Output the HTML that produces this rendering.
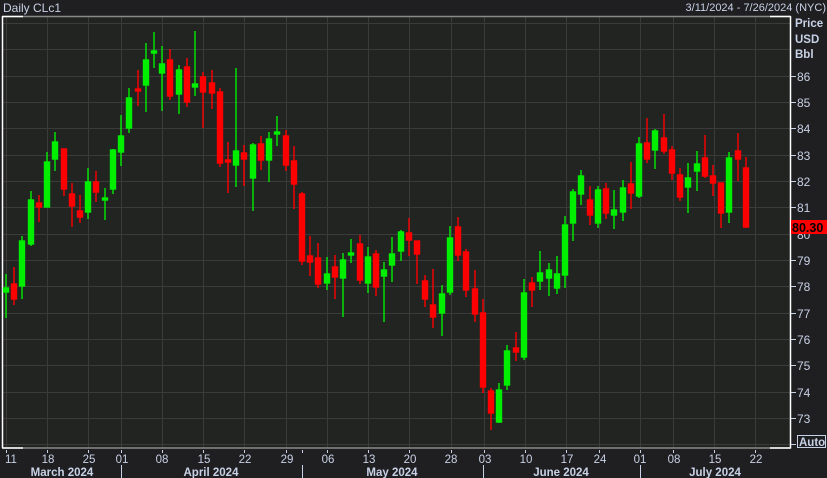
<!DOCTYPE html>
<html><head><meta charset="utf-8"><style>
html,body{margin:0;padding:0;background:#1f1e21;width:827px;height:478px;overflow:hidden}
svg{display:block}
text{font-family:"Liberation Sans",sans-serif}
</style></head><body>
<svg width="827" height="478" viewBox="0 0 827 478" xmlns="http://www.w3.org/2000/svg">
<rect x="0" y="0" width="827" height="478" fill="#1f1e21"/>
<rect x="3" y="16" width="787" height="432" fill="#222421"/>
<g stroke="#3a3b3a" stroke-width="1">
<line x1="3" x2="790" y1="23.5" y2="23.5"/><line x1="3" x2="790" y1="49.5" y2="49.5"/>
<line x1="3" x2="790" y1="76.5" y2="76.5"/><line x1="3" x2="790" y1="102.5" y2="102.5"/>
<line x1="3" x2="790" y1="128.5" y2="128.5"/><line x1="3" x2="790" y1="155.5" y2="155.5"/>
<line x1="3" x2="790" y1="181.5" y2="181.5"/><line x1="3" x2="790" y1="207.5" y2="207.5"/>
<line x1="3" x2="790" y1="234.5" y2="234.5"/><line x1="3" x2="790" y1="260.5" y2="260.5"/>
<line x1="3" x2="790" y1="286.5" y2="286.5"/><line x1="3" x2="790" y1="313.5" y2="313.5"/>
<line x1="3" x2="790" y1="339.5" y2="339.5"/><line x1="3" x2="790" y1="365.5" y2="365.5"/>
<line x1="3" x2="790" y1="392.5" y2="392.5"/><line x1="3" x2="790" y1="418.5" y2="418.5"/>
<line x1="3" x2="790" y1="444.5" y2="444.5"/>
<line x1="6.5" x2="6.5" y1="16" y2="448"/><line x1="47.5" x2="47.5" y1="16" y2="448"/>
<line x1="88.5" x2="88.5" y1="16" y2="448"/><line x1="121.5" x2="121.5" y1="16" y2="448"/>
<line x1="162.5" x2="162.5" y1="16" y2="448"/><line x1="203.5" x2="203.5" y1="16" y2="448"/>
<line x1="244.5" x2="244.5" y1="16" y2="448"/><line x1="286.5" x2="286.5" y1="16" y2="448"/>
<line x1="327.5" x2="327.5" y1="16" y2="448"/><line x1="368.5" x2="368.5" y1="16" y2="448"/>
<line x1="409.5" x2="409.5" y1="16" y2="448"/><line x1="451.5" x2="451.5" y1="16" y2="448"/>
<line x1="484.5" x2="484.5" y1="16" y2="448"/><line x1="525.5" x2="525.5" y1="16" y2="448"/>
<line x1="566.5" x2="566.5" y1="16" y2="448"/><line x1="599.5" x2="599.5" y1="16" y2="448"/>
<line x1="640.5" x2="640.5" y1="16" y2="448"/><line x1="673.5" x2="673.5" y1="16" y2="448"/>
<line x1="714.5" x2="714.5" y1="16" y2="448"/><line x1="755.5" x2="755.5" y1="16" y2="448"/>
</g>
<g stroke-width="1.5">
<line x1="3" x2="790" y1="16.5" y2="16.5" stroke="#8a8a8a"/>
<line x1="3" x2="790" y1="448" y2="448" stroke="#8a8a8a"/>
<line x1="2.5" x2="2.5" y1="16" y2="448" stroke="#ffffff"/>
<line x1="2" x2="23" y1="16.5" y2="16.5" stroke="#ffffff"/>
<line x1="2" x2="23" y1="448" y2="448" stroke="#ffffff"/>
<line x1="790.5" x2="790.5" y1="16" y2="448.5" stroke="#ffffff"/>
<line x1="770" x2="791" y1="16.5" y2="16.5" stroke="#ffffff"/>
<line x1="770" x2="791" y1="448" y2="448" stroke="#ffffff"/>
</g>
<g stroke-width="1.4">
<g stroke="#00ee00" fill="#00ee00">
<line x1="6" x2="6" y1="274" y2="318"/><rect x="3.5" y="288" width="5" height="4"/>
<line x1="22" x2="22" y1="236" y2="299"/><rect x="19.5" y="241" width="5" height="45"/>
<line x1="31" x2="31" y1="191" y2="246"/><rect x="28.5" y="200" width="5" height="44"/>
<line x1="47" x2="47" y1="152" y2="207"/><rect x="44.5" y="162" width="5" height="45"/>
<line x1="55" x2="55" y1="132" y2="171"/><rect x="52.5" y="142" width="5" height="17"/>
<line x1="88" x2="88" y1="168" y2="219"/><rect x="85.5" y="182" width="5" height="30"/>
<line x1="105" x2="105" y1="188" y2="220"/><rect x="102.5" y="198" width="5" height="2"/>
<line x1="113" x2="113" y1="149" y2="194"/><rect x="110.5" y="150" width="5" height="39"/>
<line x1="121" x2="121" y1="115" y2="166"/><rect x="118.5" y="136" width="5" height="16"/>
<line x1="129" x2="129" y1="88" y2="133"/><rect x="126.5" y="98" width="5" height="30"/>
<line x1="146" x2="146" y1="43" y2="112"/><rect x="143.5" y="60" width="5" height="25"/>
<line x1="154" x2="154" y1="32" y2="68"/><rect x="151.5" y="51" width="5" height="2"/>
<line x1="162" x2="162" y1="46" y2="111"/><rect x="159.5" y="64" width="5" height="9"/>
<line x1="179" x2="179" y1="65" y2="114"/><rect x="176.5" y="70" width="5" height="24"/>
<line x1="195" x2="195" y1="31" y2="96"/><rect x="192.5" y="84" width="5" height="3"/>
<line x1="236" x2="236" y1="68" y2="187"/><rect x="233.5" y="151" width="5" height="14"/>
<line x1="253" x2="253" y1="143" y2="211"/><rect x="250.5" y="145" width="5" height="33"/>
<line x1="269" x2="269" y1="132" y2="182"/><rect x="266.5" y="139" width="5" height="21"/>
<line x1="277" x2="277" y1="116" y2="146"/><rect x="274.5" y="132" width="5" height="2"/>
<line x1="327" x2="327" y1="257" y2="290"/><rect x="324.5" y="274" width="5" height="9"/>
<line x1="343" x2="343" y1="253" y2="317"/><rect x="340.5" y="260" width="5" height="18"/>
<line x1="351" x2="351" y1="239" y2="263"/><rect x="348.5" y="253" width="5" height="2"/>
<line x1="368" x2="368" y1="247" y2="293"/><rect x="365.5" y="257" width="5" height="26"/>
<line x1="384" x2="384" y1="262" y2="322"/><rect x="381.5" y="270" width="5" height="6"/>
<line x1="392" x2="392" y1="237" y2="282"/><rect x="389.5" y="254" width="5" height="11"/>
<line x1="401" x2="401" y1="230" y2="261"/><rect x="398.5" y="232" width="5" height="19"/>
<line x1="442" x2="442" y1="285" y2="336"/><rect x="439.5" y="294" width="5" height="19"/>
<line x1="450" x2="450" y1="226" y2="295"/><rect x="447.5" y="238" width="5" height="54"/>
<line x1="499" x2="499" y1="383" y2="423"/><rect x="496.5" y="390" width="5" height="32"/>
<line x1="507" x2="507" y1="345" y2="390"/><rect x="504.5" y="351" width="5" height="34"/>
<line x1="524" x2="524" y1="279" y2="360"/><rect x="521.5" y="293" width="5" height="64"/>
<line x1="540" x2="540" y1="251" y2="290"/><rect x="537.5" y="273" width="5" height="8"/>
<line x1="549" x2="549" y1="263" y2="296"/><rect x="546.5" y="270" width="5" height="8"/>
<line x1="557" x2="557" y1="256" y2="294"/><rect x="554.5" y="274" width="5" height="14"/>
<line x1="565" x2="565" y1="216" y2="288"/><rect x="562.5" y="225" width="5" height="50"/>
<line x1="573" x2="573" y1="189" y2="241"/><rect x="570.5" y="192" width="5" height="31"/>
<line x1="581" x2="581" y1="170" y2="205"/><rect x="578.5" y="176" width="5" height="18"/>
<line x1="598" x2="598" y1="186" y2="228"/><rect x="595.5" y="190" width="5" height="33"/>
<line x1="614" x2="614" y1="190" y2="229"/><rect x="611.5" y="210" width="5" height="5"/>
<line x1="623" x2="623" y1="180" y2="221"/><rect x="620.5" y="188" width="5" height="24"/>
<line x1="639" x2="639" y1="137" y2="198"/><rect x="636.5" y="144" width="5" height="52"/>
<line x1="655" x2="655" y1="129" y2="169"/><rect x="652.5" y="131" width="5" height="19"/>
<line x1="688" x2="688" y1="163" y2="213"/><rect x="685.5" y="178" width="5" height="9"/>
<line x1="697" x2="697" y1="151" y2="191"/><rect x="694.5" y="164" width="5" height="7"/>
<line x1="729" x2="729" y1="152" y2="223"/><rect x="726.5" y="158" width="5" height="54"/>
</g>
<g stroke="#ff0000" fill="#ff0000">
<line x1="14" x2="14" y1="267" y2="305"/><rect x="11.5" y="284" width="5" height="15"/>
<line x1="39" x2="39" y1="195" y2="222"/><rect x="36.5" y="203" width="5" height="4"/>
<line x1="64" x2="64" y1="149" y2="196"/><rect x="61.5" y="149" width="5" height="40"/>
<line x1="72" x2="72" y1="183" y2="227"/><rect x="69.5" y="194" width="5" height="12"/>
<line x1="80" x2="80" y1="195" y2="223"/><rect x="77.5" y="211" width="5" height="6"/>
<line x1="96" x2="96" y1="171" y2="202"/><rect x="93.5" y="182" width="5" height="10"/>
<line x1="138" x2="138" y1="70" y2="106"/><rect x="135.5" y="89" width="5" height="2"/>
<line x1="170" x2="170" y1="49" y2="100"/><rect x="167.5" y="60" width="5" height="36"/>
<line x1="187" x2="187" y1="58" y2="107"/><rect x="184.5" y="67" width="5" height="35"/>
<line x1="203" x2="203" y1="72" y2="128"/><rect x="200.5" y="77" width="5" height="15"/>
<line x1="212" x2="212" y1="70" y2="109"/><rect x="209.5" y="83" width="5" height="10"/>
<line x1="220" x2="220" y1="88" y2="167"/><rect x="217.5" y="92" width="5" height="71"/>
<line x1="228" x2="228" y1="142" y2="193"/><rect x="225.5" y="160" width="5" height="2"/>
<line x1="244" x2="244" y1="145" y2="186"/><rect x="241.5" y="153" width="5" height="6"/>
<line x1="261" x2="261" y1="136" y2="170"/><rect x="258.5" y="144" width="5" height="16"/>
<line x1="286" x2="286" y1="130" y2="171"/><rect x="283.5" y="136" width="5" height="29"/>
<line x1="294" x2="294" y1="146" y2="209"/><rect x="291.5" y="161" width="5" height="23"/>
<line x1="302" x2="302" y1="192" y2="265"/><rect x="299.5" y="194" width="5" height="67"/>
<line x1="310" x2="310" y1="236" y2="276"/><rect x="307.5" y="256" width="5" height="6"/>
<line x1="318" x2="318" y1="243" y2="288"/><rect x="315.5" y="258" width="5" height="26"/>
<line x1="335" x2="335" y1="255" y2="299"/><rect x="332.5" y="267" width="5" height="10"/>
<line x1="360" x2="360" y1="235" y2="284"/><rect x="357.5" y="244" width="5" height="36"/>
<line x1="376" x2="376" y1="250" y2="296"/><rect x="373.5" y="254" width="5" height="33"/>
<line x1="409" x2="409" y1="218" y2="256"/><rect x="406.5" y="233" width="5" height="7"/>
<line x1="417" x2="417" y1="241" y2="284"/><rect x="414.5" y="241" width="5" height="13"/>
<line x1="425" x2="425" y1="275" y2="307"/><rect x="422.5" y="281" width="5" height="18"/>
<line x1="433" x2="433" y1="269" y2="328"/><rect x="430.5" y="305" width="5" height="12"/>
<line x1="458" x2="458" y1="217" y2="261"/><rect x="455.5" y="227" width="5" height="28"/>
<line x1="466" x2="466" y1="249" y2="297"/><rect x="463.5" y="252" width="5" height="38"/>
<line x1="475" x2="475" y1="270" y2="322"/><rect x="472.5" y="289" width="5" height="25"/>
<line x1="483" x2="483" y1="299" y2="393"/><rect x="480.5" y="313" width="5" height="74"/>
<line x1="491" x2="491" y1="388" y2="430"/><rect x="488.5" y="391" width="5" height="22"/>
<line x1="516" x2="516" y1="332" y2="361"/><rect x="513.5" y="348" width="5" height="4"/>
<line x1="532" x2="532" y1="277" y2="307"/><rect x="529.5" y="283" width="5" height="7"/>
<line x1="590" x2="590" y1="186" y2="225"/><rect x="587.5" y="200" width="5" height="15"/>
<line x1="606" x2="606" y1="183" y2="219"/><rect x="603.5" y="189" width="5" height="24"/>
<line x1="631" x2="631" y1="162" y2="209"/><rect x="628.5" y="184" width="5" height="9"/>
<line x1="647" x2="647" y1="118" y2="163"/><rect x="644.5" y="143" width="5" height="16"/>
<line x1="664" x2="664" y1="114" y2="154"/><rect x="661.5" y="138" width="5" height="13"/>
<line x1="672" x2="672" y1="146" y2="180"/><rect x="669.5" y="150" width="5" height="23"/>
<line x1="680" x2="680" y1="168" y2="201"/><rect x="677.5" y="175" width="5" height="22"/>
<line x1="705" x2="705" y1="135" y2="178"/><rect x="702.5" y="158" width="5" height="18"/>
<line x1="713" x2="713" y1="165" y2="196"/><rect x="710.5" y="176" width="5" height="7"/>
<line x1="721" x2="721" y1="183" y2="228"/><rect x="718.5" y="183" width="5" height="30"/>
<line x1="738" x2="738" y1="133" y2="181"/><rect x="735.5" y="151" width="5" height="8"/>
<line x1="746" x2="746" y1="157" y2="228"/><rect x="743.5" y="168" width="5" height="59"/>
</g>
</g>
<g font-size="11.5" font-weight="bold" fill="#c8d2e6">
<text x="795" y="27">Price</text>
<text x="795" y="43">USD</text>
<text x="795" y="58">Bbl</text>
</g>
<g stroke="#c8d2e6" stroke-width="1">
<line x1="791" x2="796" y1="76.5" y2="76.5"/><line x1="791" x2="796" y1="102.5" y2="102.5"/>
<line x1="791" x2="796" y1="128.5" y2="128.5"/><line x1="791" x2="796" y1="155.5" y2="155.5"/>
<line x1="791" x2="796" y1="181.5" y2="181.5"/><line x1="791" x2="796" y1="207.5" y2="207.5"/>
<line x1="791" x2="796" y1="260.5" y2="260.5"/>
<line x1="791" x2="796" y1="286.5" y2="286.5"/><line x1="791" x2="796" y1="313.5" y2="313.5"/>
<line x1="791" x2="796" y1="339.5" y2="339.5"/><line x1="791" x2="796" y1="365.5" y2="365.5"/>
<line x1="791" x2="796" y1="392.5" y2="392.5"/><line x1="791" x2="796" y1="418.5" y2="418.5"/>
<line x1="791" x2="796" y1="444.5" y2="444.5"/>
</g>
<g font-size="12" fill="#c8d2e6">
<text x="797" y="81">86</text><text x="797" y="107">85</text><text x="797" y="133">84</text>
<text x="797" y="160">83</text><text x="797" y="186">82</text><text x="797" y="212">81</text>
<text x="797" y="239">80</text><text x="797" y="265">79</text><text x="797" y="291">78</text>
<text x="797" y="318">77</text><text x="797" y="344">76</text><text x="797" y="370">75</text>
<text x="797" y="397">74</text><text x="797" y="423">73</text>
</g>
<rect x="791" y="220" width="36" height="14" fill="#ff0000"/>
<text x="792" y="232" font-size="12.5" font-weight="bold" fill="#000">80.30</text>
<rect x="797.5" y="435.5" width="28" height="12" fill="#1f1e21" stroke="#c8d2e6" stroke-width="1"/>
<text x="799" y="446" font-size="11.5" font-weight="bold" fill="#c8d2e6">Auto</text>
<text x="3" y="12" font-size="12" fill="#c8d2e6">Daily CLc1</text>
<text x="826" y="11" font-size="11" fill="#c8d2e6" text-anchor="end">3/11/2024 - 7/26/2024 (NYC)</text>
<g stroke="#c8d2e6" stroke-width="1">
<line x1="6.5" x2="6.5" y1="450" y2="453"/><line x1="47.5" x2="47.5" y1="450" y2="453"/>
<line x1="88.5" x2="88.5" y1="450" y2="453"/><line x1="121.5" x2="121.5" y1="450" y2="453"/>
<line x1="162.5" x2="162.5" y1="450" y2="453"/><line x1="203.5" x2="203.5" y1="450" y2="453"/>
<line x1="244.5" x2="244.5" y1="450" y2="453"/><line x1="286.5" x2="286.5" y1="450" y2="453"/>
<line x1="302.5" x2="302.5" y1="450" y2="453"/>
<line x1="327.5" x2="327.5" y1="450" y2="453"/><line x1="368.5" x2="368.5" y1="450" y2="453"/>
<line x1="409.5" x2="409.5" y1="450" y2="453"/><line x1="451.5" x2="451.5" y1="450" y2="453"/>
<line x1="484.5" x2="484.5" y1="450" y2="453"/><line x1="525.5" x2="525.5" y1="450" y2="453"/>
<line x1="566.5" x2="566.5" y1="450" y2="453"/><line x1="599.5" x2="599.5" y1="450" y2="453"/>
<line x1="640.5" x2="640.5" y1="450" y2="453"/><line x1="673.5" x2="673.5" y1="450" y2="453"/>
<line x1="714.5" x2="714.5" y1="450" y2="453"/><line x1="755.5" x2="755.5" y1="450" y2="453"/>
<line x1="121.5" x2="121.5" y1="465" y2="478"/><line x1="302.5" x2="302.5" y1="465" y2="478"/>
<line x1="483.5" x2="483.5" y1="465" y2="478"/><line x1="640.5" x2="640.5" y1="465" y2="478"/>
</g>
<g font-size="11.5" fill="#c8d2e6" text-anchor="middle">
<text x="11" y="463">11</text><text x="48" y="463">18</text><text x="89" y="463">25</text>
<text x="122" y="463">01</text><text x="162" y="463">08</text><text x="204" y="463">15</text>
<text x="245" y="463">22</text><text x="287" y="463">29</text><text x="328" y="463">06</text>
<text x="369" y="463">13</text><text x="410" y="463">20</text><text x="451" y="463">28</text>
<text x="485" y="463">03</text><text x="526" y="463">10</text><text x="567" y="463">17</text>
<text x="600" y="463">24</text><text x="640" y="463">01</text><text x="674" y="463">08</text>
<text x="715" y="463">15</text><text x="756" y="463">22</text>
</g>
<g font-size="11.5" font-weight="bold" fill="#c8d2e6" text-anchor="middle">
<text x="62" y="476">March 2024</text><text x="211" y="476">April 2024</text>
<text x="392" y="476">May 2024</text><text x="561" y="476">June 2024</text>
<text x="715" y="476">July 2024</text>
</g>
</svg>
</body></html>
